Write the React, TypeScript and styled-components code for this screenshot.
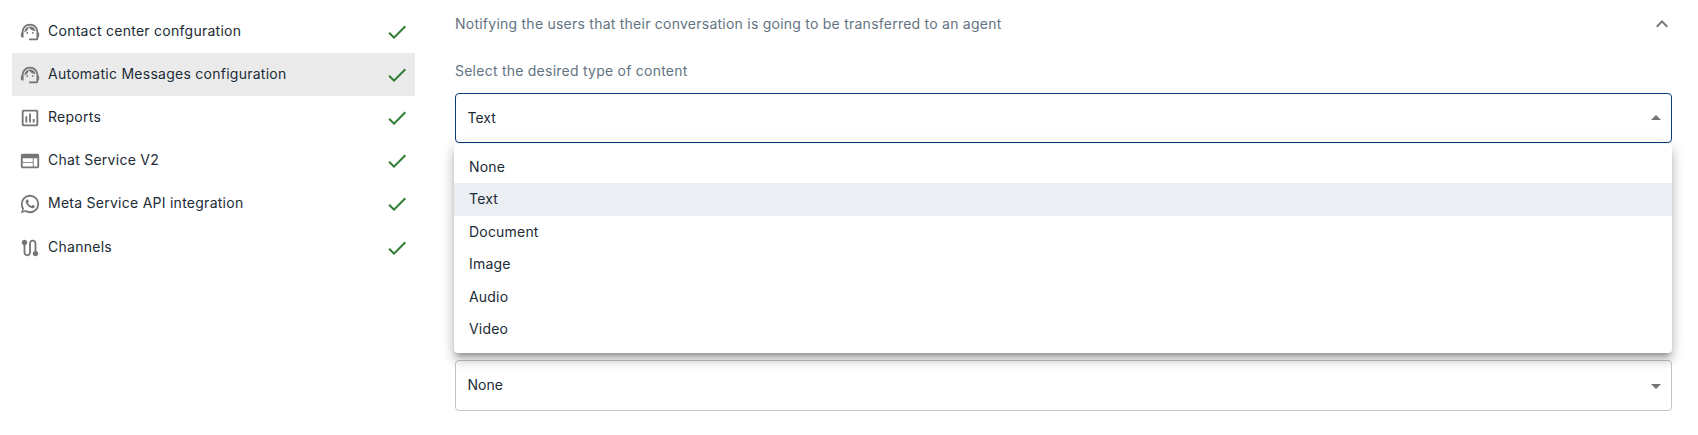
import React from "react";
import styled, { createGlobalStyle } from "styled-components";

const Global = createGlobalStyle`
  html, body { margin: 0; padding: 0; background: #fff; }
  body { font-family: Inter, "Noto Sans", sans-serif; font-size: 14px; }
  * { box-sizing: border-box; }
`;

const Page = styled.div`
  display: flex;
  width: 1698px;
  height: 435px;
  overflow: hidden;
  background: #fff;
`;

const Sidebar = styled.nav`
  width: 403px;
  margin-left: 12px;
  padding-top: 10px;
  flex: none;
  display: flex;
  flex-direction: column;
`;

const NavRow = styled.div<{ $active?: boolean }>`
  height: 43px;
  display: flex;
  align-items: center;
  padding: 0 6px 0 7px;
  background: ${(p) => (p.$active ? "#ebebeb" : "transparent")};

  &:last-child {
    margin-top: 1px;
  }
`;

const NavIcon = styled.svg`
  width: 22px;
  height: 22px;
  flex: none;
  fill: #757575;
`;

const NavLabel = styled.span`
  flex: 1;
  margin-left: 7px;
  padding-bottom: 2px;
  font-size: 14px;
  letter-spacing: 0.26px;
  color: #212b36;
`;

const CheckIcon = styled.svg`
  width: 24px;
  height: 24px;
  flex: none;
  fill: #2e7d32;
`;

const Main = styled.main`
  width: 1217px;
  margin-left: 40px;
  flex: none;
  display: flex;
  flex-direction: column;
`;

const SectionHeader = styled.div`
  height: 48px;
  display: flex;
  align-items: center;
  justify-content: space-between;
  color: #637381;
  letter-spacing: 0.24px;
`;

const HeaderText = styled.span`
  padding-bottom: 2px;
`;

const Chevron = styled.svg`
  width: 24px;
  height: 24px;
  margin-right: -2px;
  fill: #757575;
`;

const FieldLabel = styled.label`
  display: block;
  margin-top: 14px;
  height: 18px;
  line-height: 18px;
  color: #637381;
  letter-spacing: 0.24px;
`;

const Field = styled.div`
  position: relative;
  margin-top: 13px;
`;

const Select = styled.div<{ $open?: boolean }>`
  height: 50px;
  display: flex;
  align-items: center;
  justify-content: space-between;
  padding: 0 3px 0 11.5px;
  border-radius: 4px;
  border: 1px solid ${(p) => (p.$open ? "#0c3a7c" : "#c4c4c4")};
  color: #212b36;
  background: #fff;
`;

const SelectValue = styled.span`
  padding-bottom: 2px;
`;

const ClosedSelect = styled(Select)`
  height: 51px;
`;

const SecondField = styled.div`
  margin-top: 217px;
`;

const Caret = styled.svg`
  width: 24px;
  height: 24px;
  fill: #757575;
`;

const Menu = styled.ul`
  position: absolute;
  top: 51px;
  left: -1px;
  right: 0;
  margin: 0;
  padding: 6.5px 0 7.5px;
  list-style: none;
  background: #fff;
  border-radius: 4px;
  box-shadow: 0 5px 5px -3px rgba(0, 0, 0, 0.3), 0 8px 10px 1px rgba(0, 0, 0, 0.14),
    0 3px 14px 2px rgba(0, 0, 0, 0.12);
  z-index: 2;
`;

const MenuItem = styled.li<{ $selected?: boolean }>`
  height: 32.5px;
  display: flex;
  align-items: center;
  padding: 0 0 1px 15px;
  letter-spacing: 0.2px;
  color: #212b36;
  background: ${(p) => (p.$selected ? "#ebeef3" : "transparent")};
`;

const agent = (
  <>
    <path d="M21 12.22C21 6.73 16.74 3 12 3c-4.69 0-9 3.65-9 9.28-.6.34-1 .98-1 1.72v2c0 1.1.9 2 2 2h1v-6.1c0-3.87 3.13-7 7-7s7 3.13 7 7V19h-8v2h8c1.1 0 2-.9 2-2v-1.22c.59-.31 1-.92 1-1.62v-2.3c0-.7-.41-1.31-1-1.64z" />
    <circle cx="9" cy="13" r="1" />
    <circle cx="15" cy="13" r="1" />
    <path d="M18 11.03C17.52 8.18 15.04 6 12.05 6c-3.03 0-6.29 2.51-6.03 6.45 2.47-1.01 4.33-3.21 4.86-5.89 1.31 2.63 4 4.44 7.12 4.47z" />
  </>
);
const report = (
  <path d="M9 17H7v-7h2v7zm4 0h-2V7h2v10zm4 0h-2v-4h2v4zm2 2H5V5h14v14zm0-16H5c-1.1 0-2 .9-2 2v14c0 1.1.9 2 2 2h14c1.1 0 2-.9 2-2V5c0-1.1-.9-2-2-2z" />
);
const web = (
  <path d="M20 4H4c-1.1 0-1.99.9-1.99 2L2 18c0 1.1.9 2 2 2h16c1.1 0 2-.9 2-2V6c0-1.1-.9-2-2-2zm-5 14H4v-4h11v4zm0-5H4V9h11v4zm5 5h-4V9h4v9z" />
);
const whatsapp = (
  <path d="M16.75 13.96c.25.13.41.2.46.3.06.11.04.61-.21 1.18-.2.56-1.24 1.1-1.7 1.12-.46.02-.47.36-2.96-.73-2.49-1.09-3.99-3.75-4.11-3.92-.12-.17-.96-1.38-.92-2.61.05-1.22.69-1.8.95-2.04.24-.26.51-.29.68-.26h.47c.15 0 .36-.06.55.45l.69 1.87c.06.13.1.28.01.46l-.27.41-.39.42c-.12.12-.26.25-.12.5.12.26.62 1.09 1.32 1.78.91.88 1.71 1.17 1.95 1.3.24.14.39.12.54-.04l.81-.94c.19-.25.35-.19.58-.11l1.67.88M12 2a10 10 0 0 1 10 10 10 10 0 0 1-10 10c-1.97 0-3.8-.57-5.35-1.55L2 22l1.55-4.65A9.969 9.969 0 0 1 2 12 10 10 0 0 1 12 2m0 2a8 8 0 0 0-8 8c0 1.72.54 3.31 1.46 4.61L4.5 19.5l2.89-.96A7.95 7.95 0 0 0 12 20a8 8 0 0 0 8-8 8 8 0 0 0-8-8z" />
);
const route = (
  <path d="M19 15.18V7c0-2.21-1.79-4-4-4s-4 1.79-4 4v10c0 1.1-.9 2-2 2s-2-.9-2-2V8.82C8.16 8.4 9 7.3 9 6c0-1.66-1.34-3-3-3S3 4.34 3 6c0 1.3.84 2.4 2 2.82V17c0 2.21 1.79 4 4 4s4-1.79 4-4V7c0-1.1.9-2 2-2s2 .9 2 2v8.18c-1.16.41-2 1.51-2 2.82 0 1.66 1.34 3 3 3s3-1.34 3-3c0-1.3-.84-2.4-2-2.82z" />
);

const navItems = [
  { label: "Contact center confguration", icon: agent },
  { label: "Automatic Messages configuration", icon: agent, active: true },
  { label: "Reports", icon: report },
  { label: "Chat Service V2", icon: web },
  { label: "Meta Service API integration", icon: whatsapp },
  { label: "Channels", icon: route },
];

const options = ["None", "Text", "Document", "Image", "Audio", "Video"];

export default function App() {
  return (
    <Page>
      <Global />
      <Sidebar>
        {navItems.map((item) => (
          <NavRow key={item.label} $active={item.active}>
            <NavIcon viewBox="0 0 24 24">{item.icon}</NavIcon>
            <NavLabel>{item.label}</NavLabel>
            <CheckIcon viewBox="0 0 24 24">
              <path d="M9 16.17 4.83 12l-1.42 1.41L9 19 21 7l-1.41-1.41z" />
            </CheckIcon>
          </NavRow>
        ))}
      </Sidebar>
      <Main>
        <SectionHeader>
          <HeaderText>Notifying the users that their conversation is going to be transferred to an agent</HeaderText>
          <Chevron viewBox="0 0 24 24">
            <path d="m12 8-6 6 1.41 1.41L12 10.83l4.59 4.58L18 14z" />
          </Chevron>
        </SectionHeader>
        <FieldLabel>Select the desired type of content</FieldLabel>
        <Field>
          <Select $open>
            <SelectValue>Text</SelectValue>
            <Caret viewBox="0 0 24 24">
              <path d="m7 14 5-5 5 5z" />
            </Caret>
          </Select>
          <Menu>
            {options.map((o) => (
              <MenuItem key={o} $selected={o === "Text"}>
                {o}
              </MenuItem>
            ))}
          </Menu>
        </Field>
        <SecondField>
          <ClosedSelect>
            <SelectValue>None</SelectValue>
            <Caret viewBox="0 0 24 24">
              <path d="m7 10 5 5 5-5z" />
            </Caret>
          </ClosedSelect>
        </SecondField>
      </Main>
    </Page>
  );
}
